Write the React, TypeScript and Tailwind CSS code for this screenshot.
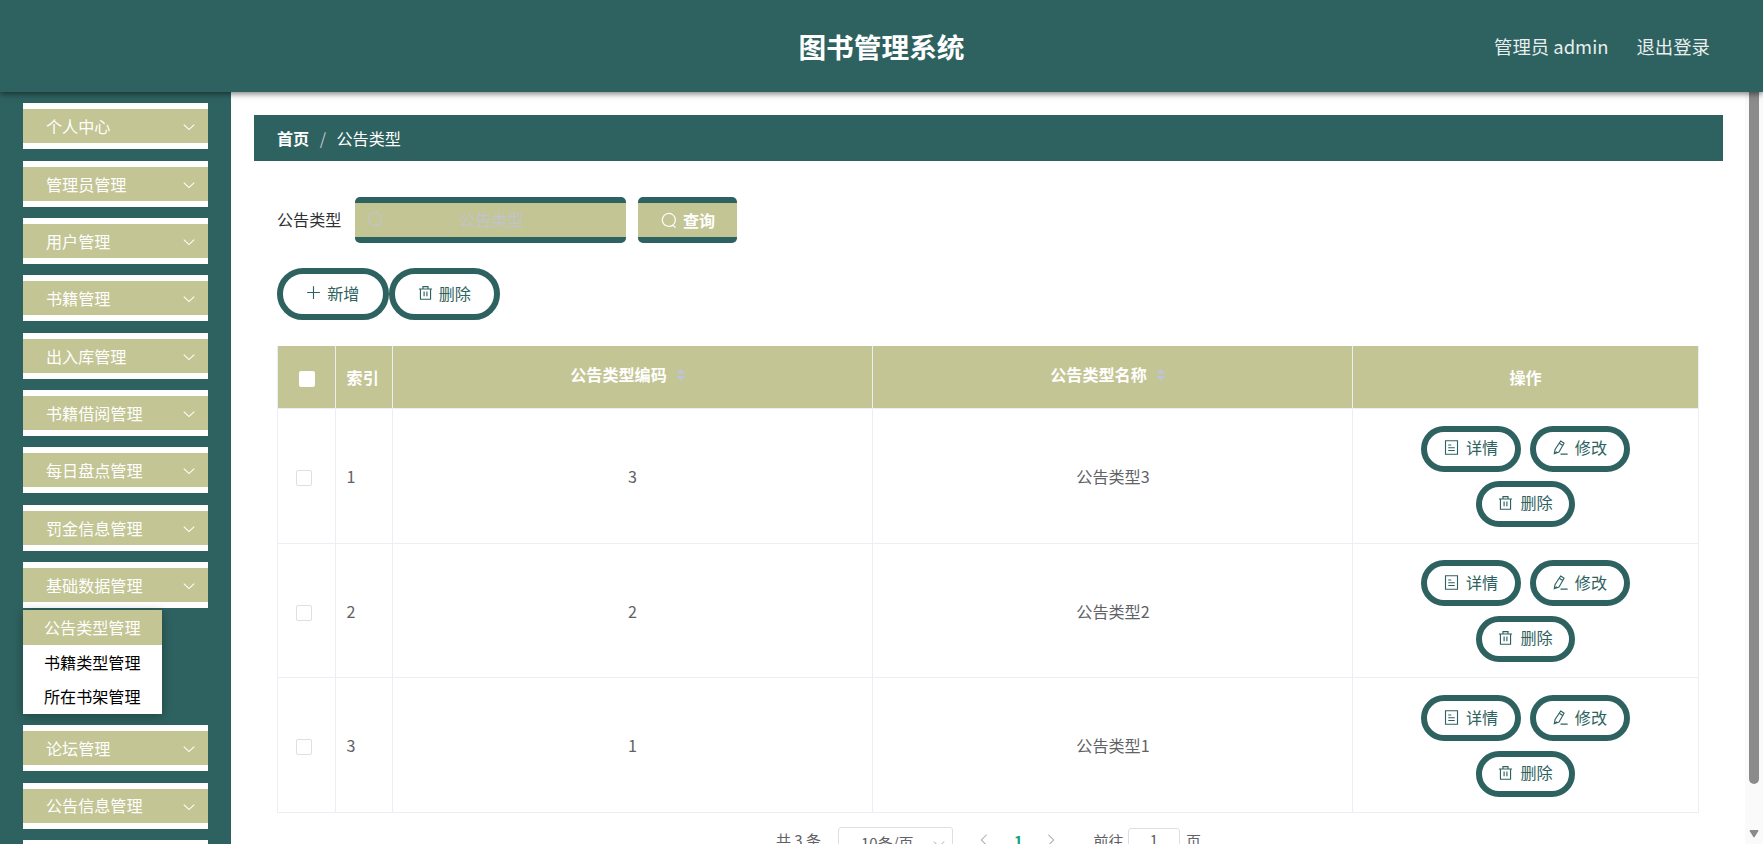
import React from "react";

interface MenuItem {
  label?: string;
  children?: string[];
}

interface NoticeType {
  id: number;
  code: string;
  name: string;
}

const menus: MenuItem[] = [
  { label: "个人中心" },
  { label: "管理员管理" },
  { label: "用户管理" },
  { label: "书籍管理" },
  { label: "出入库管理" },
  { label: "书籍借阅管理" },
  { label: "每日盘点管理" },
  { label: "罚金信息管理" },
  {
    label: "基础数据管理",
    children: ["公告类型管理", "书籍类型管理", "所在书架管理"],
  },
  { label: "论坛管理" },
  { label: "公告信息管理" },
  {},
];

const rows: NoticeType[] = [
  { id: 1, code: "3", name: "公告类型3" },
  { id: 2, code: "2", name: "公告类型2" },
  { id: 3, code: "1", name: "公告类型1" },
];

const iconPaths = {
  down: "M2 5.2 8 11 14 5.2",
  left: "M11 2 5 8l6 6",
  right: "M5 2l6 6-6 6",
  search: "M11.6 13.2 14.6 15.4M11.6 13.2A6.5 6.5 0 1 0 8 14.4Q10 14.4 11.6 13.2",
  plus: "M8 1.2v13.6M1.2 8h13.6",
  trash: "M1 4.2h14M5.3 4V1.7h5.4V4M2.6 4.2v11h10.8v-11M6.5 7v5M9.5 7v5",
  doc: "M1.6.8h12.8v14.4H1.6ZM4.5 5.3h3.2M4.5 8.2h7M4.5 11.2h7",
  edit: "M8.2 1 11.8 3.4 6.4 12.8 1.4 14.6 2.2 10.2ZM6.7 3.4l3.7 2.4M1.4 14.6l2.8-2.2M8 15h7.6",
};

interface IconProps {
  name: keyof typeof iconPaths;
  className?: string;
}

const Icon: React.FC<IconProps> = ({ name, className = "size-[15px]" }) => (
  <svg
    viewBox="0 0 16 16"
    fill="none"
    stroke="currentColor"
    strokeWidth="1.2"
    className={`shrink-0 ${className}`}>
    <path d={iconPaths[name]} />
  </svg>
);

const SortCaret: React.FC = () => (
  <svg viewBox="0 0 10 16" className="mt-[2px] mr-[9px] ml-[9px] h-4 w-[10px] fill-[#c0c4cc]">
    <path d="M5 1.4 9.6 7H.4ZM5 14.6 .4 9h9.2Z" />
  </svg>
);

const ActionButton: React.FC<{ icon: IconProps["name"]; label: string }> = ({
  icon,
  label,
}) => (
  <button className="flex h-[46px] w-[99.5px] items-center justify-center gap-[7px] rounded-full border-[6px] border-[#2e6260] pb-[3px]">
    <Icon name={icon} className="mt-px size-[15px]" />
    {label}
  </button>
);

const Sidebar: React.FC = () => (
  <aside className="w-[230.5px] shrink-0 bg-[#2e6260] px-[23px] pt-[11px] text-white">
    {menus.map((menu, index) => (
      <div key={index} className="mb-[11.35px]">
        <div className="flex h-[46px] w-[185px] items-center justify-between border-y-[6px] border-white bg-[#c3c594] pr-[12px] pl-[23px]">
          <span>{menu.label}</span>
          <Icon name="down" className="mt-[2px] size-[14px]" />
        </div>
        {menu.children && (
          <ul className="mt-[2px] w-[139px] bg-white text-black shadow-[0_2px_10px_rgba(0,0,0,0.3)]">
            {menu.children.map((child, childIndex) => (
              <li
                key={child}
                className={`flex h-[34.6px] items-center pl-[21px] ${
                  childIndex === 0 ? "bg-[#c3c594] text-white" : ""
                }`}>
                {child}
              </li>
            ))}
          </ul>
        )}
      </div>
    ))}
  </aside>
);

const gridCols = "grid grid-cols-[57.6px_57.4px_480px_480px_1fr]";

const NoticeTable: React.FC = () => (
  <div className="mt-[25.7px] border-l border-[#ebeef5] text-[#606266]">
    <div
      className={`${gridCols} h-[63px] bg-[#c3c594] font-bold text-white *:border-r *:border-b *:border-[#ebeef5]`}>
      <div className="flex items-center justify-center pt-[4px] pl-px">
        <span className="size-[16px] rounded-[2px] bg-white" />
      </div>
      <div className="flex items-center pt-px pl-[11px]">索引</div>
      <div className="flex items-center justify-center pb-[5px]">
        公告类型编码
        <SortCaret />
      </div>
      <div className="flex items-center justify-center pb-[5px]">
        公告类型名称
        <SortCaret />
      </div>
      <div className="flex items-center justify-center pt-px">操作</div>
    </div>
    {rows.map((row) => (
      <div
        key={row.id}
        className={`${gridCols} h-[134.8px] *:border-r *:border-b *:border-[#ebeef5]`}>
        <div className="flex items-center pt-[4px] pl-[18px]">
          <span className="size-4 rounded-[2px] border border-[#dcdfe6] bg-white" />
        </div>
        <div className="flex items-center pl-[11px]">{row.id}</div>
        <div className="flex items-center justify-center">{row.code}</div>
        <div className="flex items-center justify-center pl-px">{row.name}</div>
        <div className="flex flex-wrap content-center justify-center gap-[9.4px] px-[60px] pt-px text-[#2e6260]">
          <ActionButton icon="doc" label="详情" />
          <ActionButton icon="edit" label="修改" />
          <ActionButton icon="trash" label="删除" />
        </div>
      </div>
    ))}
  </div>
);

const Pagination: React.FC = () => (
  <div className="mt-[14px] flex h-8 items-start pl-[499px] text-[15px] leading-8 text-[#606266]">
    <span className="-mt-[3px] w-[62px]">共 3 条</span>
    <div className="flex h-8 w-[115px] items-center justify-between rounded-[3px] border border-[#dcdfe6] pr-[6px] pb-px pl-[22px]">
      10条/页
      <Icon name="down" className="mt-[2px] size-[14px] text-[#c0c4cc]" />
    </div>
    <Icon name="left" className="mt-[6px] ml-[24px] size-[14px] text-[#a8abb2]" />
    <span className="-mt-[2px] ml-[23px] w-[10px] font-bold text-[#10a37f]">1</span>
    <Icon name="right" className="mt-[6px] ml-[20px] size-[14px] text-[#a8abb2]" />
    <span className="-mt-[2px] ml-[35.5px] w-[34.5px]">前往</span>
    <span className="mt-px h-8 w-[52px] rounded-[3px] border border-[#dcdfe6] text-center leading-[22px]">
      1
    </span>
    <span className="-mt-[2px] ml-[6px]">页</span>
  </div>
);

const App: React.FC = () => {
  return (
    <div className="flex h-[844px] w-[1763px] flex-col overflow-hidden bg-white font-['Noto_Sans_CJK_SC',sans-serif] text-[16.1px] leading-none">
      <header className="relative z-10 grid h-[92.3px] shrink-0 grid-cols-3 items-center bg-[#2e6260] text-white shadow-[0_2px_6px_rgba(0,0,0,0.5)]">
        <h1 className="col-start-2 pt-px text-center text-[27.7px] font-bold">
          图书管理系统
        </h1>
        <div className="flex justify-end gap-[28px] pr-[53px] pt-px text-[18.4px] text-[#e8eeed]">
          <span>管理员 admin</span>
          <span>退出登录</span>
        </div>
      </header>

      <div className="flex min-h-0 grow">
        <Sidebar />

        <main className="min-w-0 grow pt-[23.1px] pl-[23.5px]">
          <nav className="flex h-[46px] w-[1468.5px] items-center bg-[#2e6260] pl-[23px] text-white">
            <span className="font-bold">首页</span>
            <span className="mx-[10.5px] text-[#c0c4cc]">/</span>
            <span>公告类型</span>
          </nav>

          <div className="w-[1445px] pt-[35.3px] pl-[23px]">
            <div className="flex items-center">
              <span className="w-[78.3px] pb-[2px] text-[#303133]">公告类型</span>
              <div className="flex h-[46.5px] w-[270.5px] items-center rounded-[5px] border-y-[6px] border-[#2e6260] bg-[#c3c594] pb-px pl-[12px] text-[#c0c4cc]">
                <Icon name="search" className="size-4" />
                <span className="ml-[76px]">公告类型</span>
              </div>
              <button className="ml-[12px] flex h-[46.5px] w-[99.5px] items-center justify-center gap-[6px] rounded-[5px] border-y-[6px] border-[#2e6260] bg-[#c3c594] pl-px font-bold text-white">
                <Icon name="search" className="size-4" />
                查询
              </button>
            </div>

            <div className="mt-[25px] flex text-[#2e6260]">
              <button className="flex h-[52px] w-[111.5px] items-center justify-center gap-[6px] rounded-full border-[6px] border-[#2e6260] pb-[3px]">
                <Icon name="plus" />
                新增
              </button>
              <button className="flex h-[52px] w-[111.5px] items-center justify-center gap-[6px] rounded-full border-[6px] border-[#2e6260] pb-[3px]">
                <Icon name="trash" />
                删除
              </button>
            </div>

            <NoticeTable />
            <Pagination />
          </div>
        </main>

        <div className="flex w-[18px] shrink-0 flex-col items-center bg-[#fafafa]">
          <div className="h-[691.7px] w-[10px] rounded-b-full bg-[#8b8b8b]" />
          <svg viewBox="0 0 10 8" className="mt-[46px] h-[8px] w-[10px] fill-[#8b8b8b]">
            <path d="M1.5 0h7q1.5 0 .7 1.3L5.8 6.7q-.8 1.2-1.6 0L.8 1.3Q0 0 1.5 0Z" />
          </svg>
        </div>
      </div>
    </div>
  );
};

export default App;
